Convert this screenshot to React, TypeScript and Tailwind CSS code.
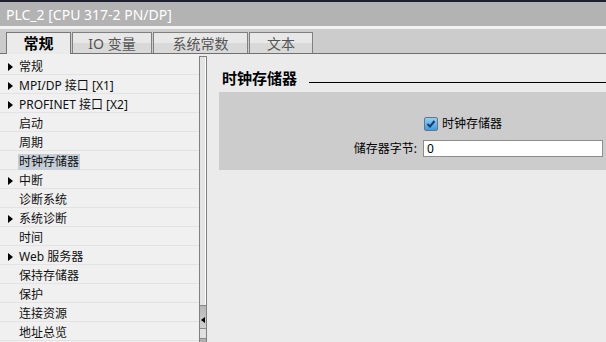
import React from "react"

const font = "font-['Noto_Sans','Noto_Sans_CJK_SC',sans-serif]"

type NavItem = { label: string; arrow?: boolean; selected?: boolean }

const navItems: NavItem[] = [
  { label: "常规", arrow: true },
  { label: "MPI/DP 接口 [X1]", arrow: true },
  { label: "PROFINET 接口 [X2]", arrow: true },
  { label: "启动" },
  { label: "周期" },
  { label: "时钟存储器", selected: true },
  { label: "中断", arrow: true },
  { label: "诊断系统" },
  { label: "系统诊断", arrow: true },
  { label: "时间" },
  { label: "Web 服务器", arrow: true },
  { label: "保持存储器" },
  { label: "保护" },
  { label: "连接资源" },
  { label: "地址总览" },
]

const tabs = [
  { label: "常规", w: "w-[65px]", active: true },
  { label: "IO 变量", w: "w-[80px]" },
  { label: "系统常数", w: "w-[95px]" },
  { label: "文本", w: "w-[64px]" },
]

function Tab({ label, w, active }: { label: string; w: string; active?: boolean }) {
  if (active) {
    return (
      <div
        className={`${w} h-[22px] -mb-[1px] border-x border-t border-[#777] bg-[#ebebeb] flex items-center justify-center text-[15px] font-bold text-black`}
      >
        {label}
      </div>
    )
  }
  return (
    <div
      className={`${w} h-[21px] border-x border-t border-[#808080] bg-[linear-gradient(#e8e8e8_0%,#e8e8e8_50%,#d9d9d9_50%,#d9d9d9_100%)] flex items-center justify-center text-[14px] text-[#555]`}
    >
      {label}
    </div>
  )
}

export default function App() {
  return (
    <div className={`${font} w-[606px] h-[342px] overflow-hidden flex flex-col bg-[#ebebeb]`}>
      <div className="h-[2px] bg-[#1e2030]" />
      <div className="h-[24px] bg-[#b3b3b3] flex items-center pl-[6px] text-[14px] text-white">
        PLC_2 [CPU 317-2 PN/DP]
      </div>
      <div className="h-[3px] bg-[#f2f2f2]" />
      <div className="h-[25px] bg-[#cccccc] border-b border-[#707070] flex items-end pl-[6px] gap-[1px]">
        {tabs.map((t) => (
          <Tab key={t.label} {...t} />
        ))}
      </div>

      <div className="flex-1 flex min-h-0">
        {/* left navigation */}
        <div className="w-[199px] bg-[#f0f0f0] pt-[2px] flex flex-col">
          {navItems.map((item) => (
            <div key={item.label} className="h-[19px] shrink-0 pt-[3px] border-b border-[#e3e3e3] flex items-center text-[12px] text-[#111]">
              <div className="w-[18px] flex justify-center pl-[2px]">
                {item.arrow && (
                  <div className="w-0 h-0 border-y-[4px] border-y-transparent border-l-[5px] border-l-black" />
                )}
              </div>
              <span className={item.selected ? "bg-[#c5ced8] px-[1px] leading-[16px]" : "px-[1px]"}>{item.label}</span>
            </div>
          ))}
        </div>

        {/* splitter */}
        <div className="w-[8px] mt-[2px] border-x border-t border-[#808080] flex flex-col">
          <div className="flex-1 bg-[#e4e4e4] border-r border-white" />
          <div className="h-[23px] border-t border-[#8a8a8a] bg-[linear-gradient(#b8b8b8,#d0d0d0)] flex items-end pb-[5px] pl-[1px]">
            <div className="w-0 h-0 border-y-[3px] border-y-transparent border-r-[4px] border-r-black" />
          </div>
          <div className="h-[10px] border-t border-[#8a8a8a] bg-[#e0e0e0]" />
          <div className="h-[4px] border-t border-[#8a8a8a] bg-[#b0b0b0]" />
        </div>

        {/* content */}
        <div className="flex-1 pl-[12px] pt-[15px]">
          <div className="h-[18px] flex items-center pl-[3px]">
            <span className="text-[15px] font-bold text-black leading-none">时钟存储器</span>
            <div className="flex-1 ml-[12px] mt-[9px] border-b border-black" />
          </div>
          <div className="mt-[5px] h-[78px] bg-[#cccccc] grid grid-cols-[198px_180px] gap-x-[6px] content-start pt-[25px] text-[12px] text-black">
            <div />
            <div className="flex items-center h-[14px] gap-[4px] ml-[1px]">
              <div className="w-[14px] h-[14px] rounded-[2px] border border-[#6b7480] bg-[linear-gradient(#8fd0f5,#3d9be0)] flex items-center justify-center">
                <svg width="10" height="10" viewBox="0 0 10 10">
                  <path d="M1.5 5 L4 7.5 L8.5 2" fill="none" stroke="#1c3a6b" strokeWidth="2" />
                </svg>
              </div>
              <span>时钟存储器</span>
            </div>
            <div className="mt-[9px] h-[17px] flex items-center justify-end">储存器字节:</div>
            <div className="mt-[9px] h-[17px] bg-white border border-[#8c8c8c] flex items-center pl-[3px]">0</div>
          </div>
        </div>
      </div>
    </div>
  )
}
